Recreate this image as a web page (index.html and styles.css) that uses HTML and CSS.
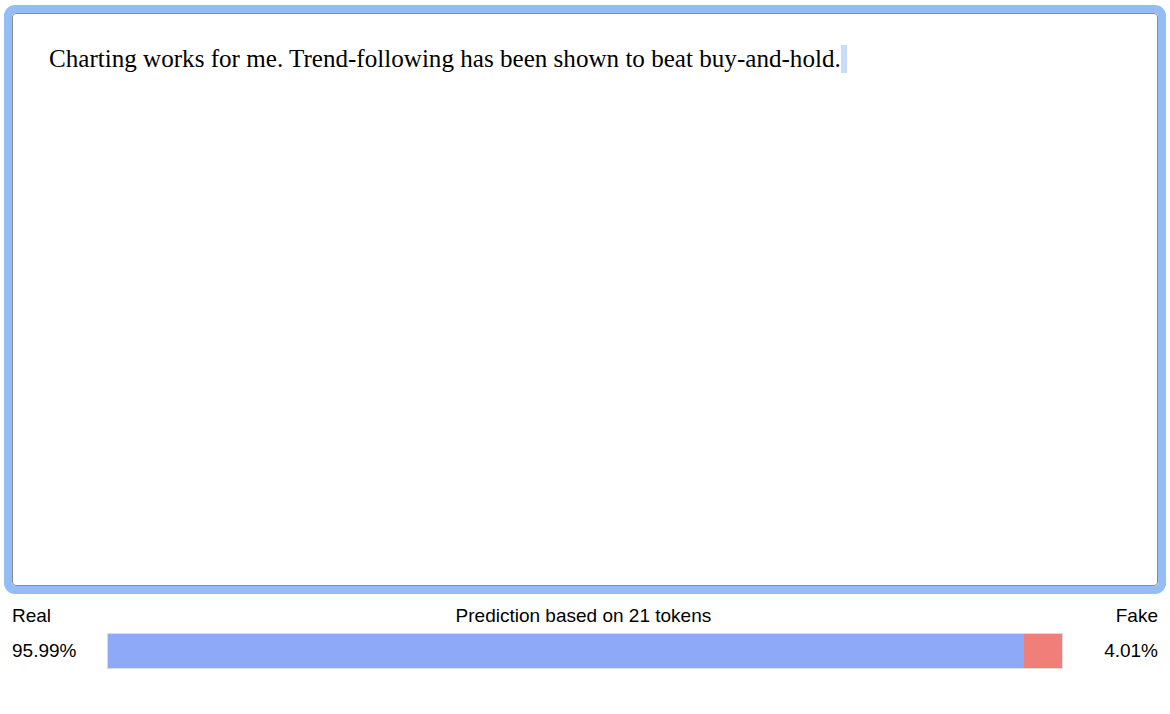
FILE: index.html
```html
<!DOCTYPE html>
<html>
<head>
<meta charset="utf-8">
<link rel="stylesheet" href="styles.css">
</head>
<body>
<div class="editor">
  <p class="entry">Charting works for me. Trend-following has been shown to beat buy-and-hold.<span class="caret"></span></p>
</div>
<div class="result">
  <div class="labels">
    <span>Real</span>
    <span>Prediction based on 21 tokens</span>
    <span>Fake</span>
  </div>
  <div class="meter">
    <span class="pct">95.99%</span>
    <div class="bar">
      <div class="real" style="width: 95.99%"></div>
      <div class="fake"></div>
    </div>
    <span class="pct right">4.01%</span>
  </div>
</div>
</body>
</html>
```
FILE: styles.css
```css
html, body {
  margin: 0;
  padding: 0;
  background: #fff;
}
body {
  padding-top: 13px;
  font-family: "Liberation Sans", Arial, sans-serif;
  color: #000;
}
.editor {
  margin: 0 12px;
  height: 573px;
  box-sizing: border-box;
  border: 1px solid #8c8c8c;
  border-radius: 4px;
  box-shadow: 0 0 0 8px #93bdf4;
  padding: 30px 36px;
}
.entry {
  margin: 0;
  font-family: "Liberation Serif", "Times New Roman", serif;
  font-size: 25.1px;
  line-height: 30px;
}
.caret {
  display: inline-block;
  width: 6px;
  height: 28px;
  background: #c6dcf8;
  vertical-align: -6px;
}
.result {
  padding: 0 12px;
  margin-top: 19px;
  font-size: 19px;
}
.labels {
  display: flex;
  justify-content: space-between;
  line-height: 22px;
}
.meter {
  display: grid;
  grid-template-columns: 95px 1fr 95px;
  align-items: center;
  margin-top: 6px;
}
.pct.right {
  text-align: right;
}
.bar {
  display: flex;
  height: 36px;
  box-sizing: border-box;
  border: 1px solid #dcdcdc;
  background: #ef7f78;
}
.real {
  background: #8eaaf6;
  height: 100%;
}
.fake {
  flex: 1;
  background: #ef7f78;
}
```
